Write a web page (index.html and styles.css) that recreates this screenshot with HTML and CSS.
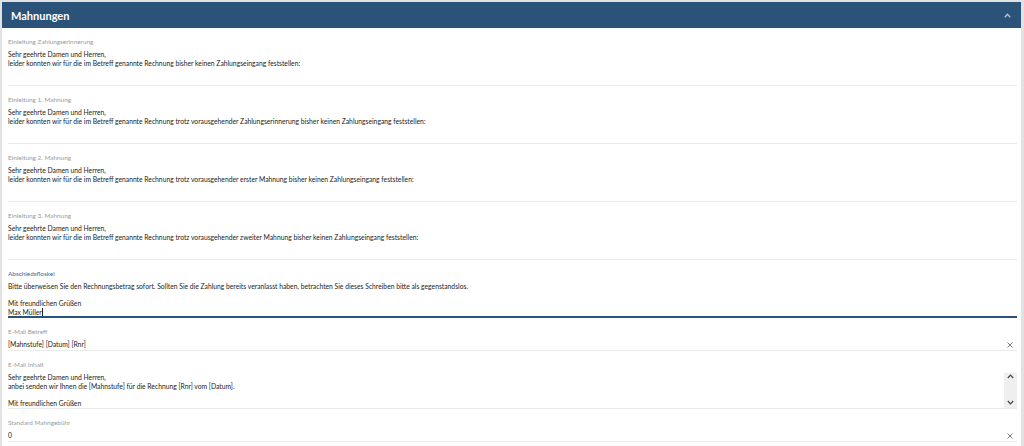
FILE: index.html
```html
<!DOCTYPE html>
<html lang="de">
<head>
<meta charset="utf-8">
<title>Mahnungen</title>
<link rel="stylesheet" href="styles.css">
</head>
<body>
<div class="page">
  <section class="panel">
    <header class="panel-header">
      <h2 class="panel-title">Mahnungen</h2>
      <svg class="panel-toggle" width="7" height="5" viewBox="0 0 7 5"><path d="M0.8 4.2 L3.5 1.3 L6.2 4.2" fill="none" stroke="#b5c5d6" stroke-width="1.3"/></svg>
    </header>
    <div class="panel-body">
      <div class="field">
        <label class="field-label">Einleitung Zahlungserinnerung</label>
        <div class="field-text area">Sehr geehrte Damen und Herren,<br>leider konnten wir für die im Betreff genannte Rechnung bisher keinen Zahlungseingang feststellen:</div>
      </div>
      <div class="field">
        <label class="field-label">Einleitung 1. Mahnung</label>
        <div class="field-text area">Sehr geehrte Damen und Herren,<br>leider konnten wir für die im Betreff genannte Rechnung trotz vorausgehender Zahlungserinnerung bisher keinen Zahlungseingang feststellen:</div>
      </div>
      <div class="field">
        <label class="field-label">Einleitung 2. Mahnung</label>
        <div class="field-text area">Sehr geehrte Damen und Herren,<br>leider konnten wir für die im Betreff genannte Rechnung trotz vorausgehender erster Mahnung bisher keinen Zahlungseingang feststellen:</div>
      </div>
      <div class="field">
        <label class="field-label">Einleitung 3. Mahnung</label>
        <div class="field-text area">Sehr geehrte Damen und Herren,<br>leider konnten wir für die im Betreff genannte Rechnung trotz vorausgehender zweiter Mahnung bisher keinen Zahlungseingang feststellen:</div>
      </div>
      <div class="field focused">
        <label class="field-label">Abschiedsfloskel</label>
        <div class="field-text area">Bitte überweisen Sie den Rechnungsbetrag sofort. Sollten Sie die Zahlung bereits veranlasst haben, betrachten Sie dieses Schreiben bitte als gegenstandslos.<br><br>Mit freundlichen Grüßen<br>Max Müller<span class="caret"></span></div>
      </div>
      <div class="field">
        <label class="field-label">E-Mail Betreff</label>
        <div class="field-text single"><span>[Mahnstufe] [Datum] [Rnr]</span><svg class="clear" width="6" height="6" viewBox="0 0 6 6"><path d="M0.5 0.5 L5.5 5.5 M5.5 0.5 L0.5 5.5" stroke="#6f6f6f" stroke-width="0.9"/></svg></div>
      </div>
      <div class="field">
        <label class="field-label">E-Mail Inhalt</label>
        <div class="field-text area scroll-area">
          <div class="scroll-content">Sehr geehrte Damen und Herren,<br>anbei senden wir Ihnen die [Mahnstufe] für die Rechnung [Rnr] vom [Datum].<br><br>Mit freundlichen Grüßen<br>Max Mustermann</div>
          <div class="scrollbar">
            <svg width="7" height="5" viewBox="0 0 7 5"><path d="M0.8 4 L3.5 1.2 L6.2 4" fill="none" stroke="#444" stroke-width="1.2"/></svg>
            <svg width="7" height="5" viewBox="0 0 7 5"><path d="M0.8 1 L3.5 3.8 L6.2 1" fill="none" stroke="#444" stroke-width="1.2"/></svg>
          </div>
        </div>
      </div>
      <div class="field">
        <label class="field-label">Standard Mahngebühr</label>
        <div class="field-text single"><span>0</span><svg class="clear" width="6" height="6" viewBox="0 0 6 6"><path d="M0.5 0.5 L5.5 5.5 M5.5 0.5 L0.5 5.5" stroke="#6f6f6f" stroke-width="0.9"/></svg></div>
      </div>
    </div>
  </section>
</div>
</body>
</html>
```
FILE: styles.css
```css
html, body {
  margin: 0;
  height: 100%;
}
body {
  background: #e2e2e2;
  font-family: Lato, "Open Sans", sans-serif;
  overflow: hidden;
}
.page {
  height: 100%;
  box-sizing: border-box;
  padding: 2px 3px 0 2px;
}
.panel {
  background: #fff;
  height: 100%;
}
.panel-header {
  height: 26px;
  background: #2b5279;
  display: flex;
  align-items: center;
  justify-content: space-between;
  padding: 0 10px 0 9px;
}
.panel-title {
  margin: 0;
  color: #fff;
  font-size: 11px;
  font-weight: 700;
}
.panel-toggle {
  display: block;
}
.panel-body {
  padding: 0 4px 0 6px;
}
.field {
  padding-top: 10px;
  border-bottom: 1px solid #ebebeb;
}
.field-label {
  display: block;
  font-size: 6.4px;
  line-height: 8px;
  color: #9a9a9a;
  margin-bottom: 4px;
}
.field-text {
  font-size: 6.75px;
  line-height: 8.6px;
  color: #222;
}
.area {
  height: 35px;
  overflow: hidden;
}
.single {
  height: 9px;
  line-height: 9px;
  padding: 0 4px 1px 0;
  display: flex;
  align-items: center;
  justify-content: space-between;
}
.clear {
  display: block;
}
.focused {
  border-bottom: 2px solid #2b5279;
}
.focused .area {
  height: 34px;
}
.focused .field-label {
  color: #3b6a9b;
}
.caret {
  display: inline-block;
  width: 1px;
  height: 8px;
  background: #222;
  vertical-align: -1px;
}
.scroll-area {
  display: flex;
}
.scroll-content {
  flex: 1;
}
.scrollbar {
  width: 13px;
  margin-top: -3px;
  height: 38px;
  background: #efefef;
  display: flex;
  flex-direction: column;
  justify-content: space-between;
  align-items: center;
  padding: 4px 0 3px;
  box-sizing: border-box;
}
.scrollbar svg {
  display: block;
}
```
